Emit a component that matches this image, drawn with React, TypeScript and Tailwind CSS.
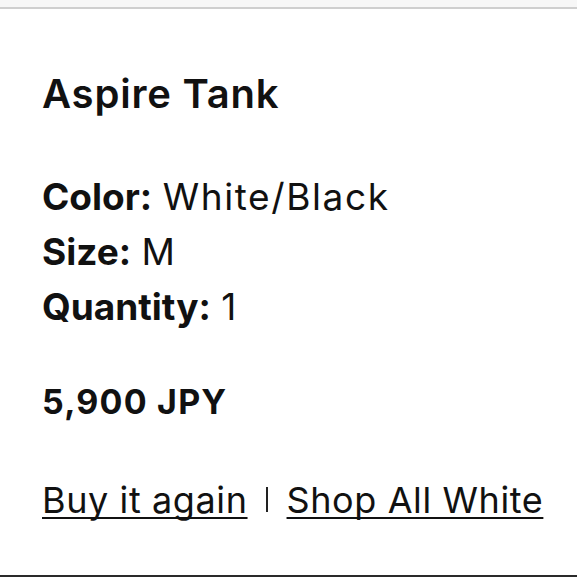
const details = [
  { label: "Color:", value: "White/Black" },
  { label: "Size:", value: "M" },
  { label: "Quantity:", value: "1" },
];

const App = () => {
  return (
    <div className="w-[577px] h-[577px] bg-white flex flex-col text-[#111] font-['Inter','Liberation_Sans',sans-serif] overflow-hidden">
      <div className="h-[7px] bg-[#f7f7f7]" />
      <div className="flex-1 border-t-2 border-b-2 border-t-[#cfcfcf] border-b-[#2a2a2a] pl-[42px] pt-[64px]">
        <h1 className="text-[40px] leading-[42px] font-semibold tracking-[0.02em]">Aspire Tank</h1>

        {/* order details */}
        <div className="mt-[54px] flex flex-col">
          {details.map(d => (
            <div key={d.label} className="text-[37px] leading-[55px]">
              <span className="font-bold">{d.label}</span>{" "}
              <span className="font-normal tracking-[1.6px]">{d.value}</span>
            </div>
          ))}
        </div>

        <div className="mt-[40px] text-[34px] leading-[55px] font-bold tracking-[1.2px]">5,900 JPY</div>

        <div className="mt-[44px] text-[36px] leading-[55px] tracking-[0.6px] flex items-start">
          <a href="#" className="underline decoration-2 underline-offset-[4px] [text-decoration-skip-ink:none]">Buy it again</a>
          <div className="mt-[14px] ml-[18px] mr-[19px] w-[2px] h-[25px] bg-[#222]" />
          <a href="#" className="underline decoration-2 underline-offset-[4px] [text-decoration-skip-ink:none]">Shop All White</a>
        </div>
      </div>
    </div>
  );
};

export default App;
